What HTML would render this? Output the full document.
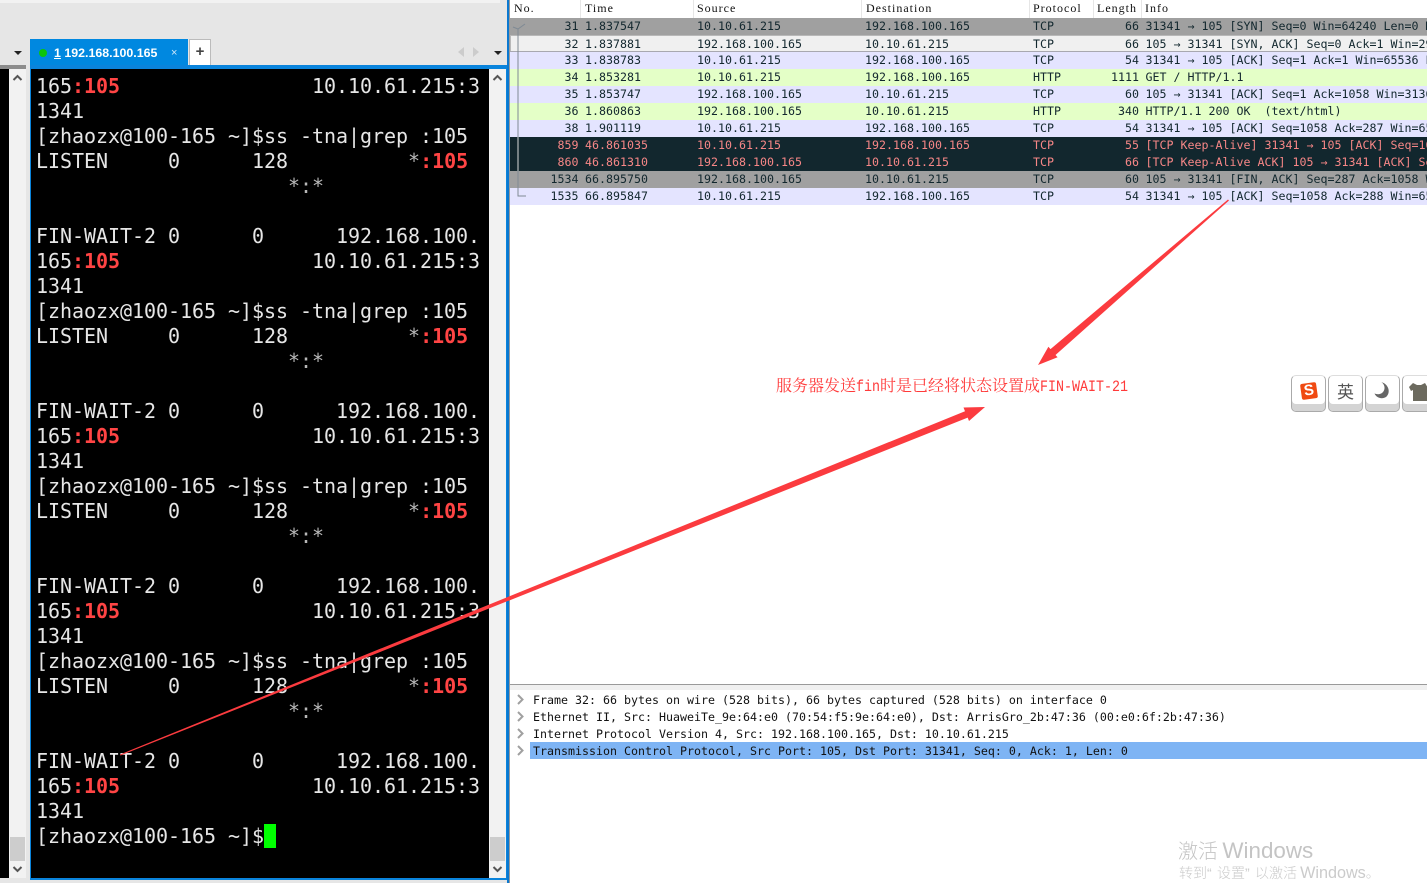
<!DOCTYPE html>
<html><head><meta charset="utf-8"><style>
html,body{margin:0;padding:0;background:#fff}
#p{position:relative;width:1427px;height:883px;overflow:hidden;background:#fff}
.a{position:absolute}
pre{margin:0}
#term{position:absolute;left:36px;top:74px;font:20px/25px "DejaVu Sans Mono",monospace;letter-spacing:-.04px;color:#e6e6e6;white-space:pre}
#term b{color:#ff4444;font-weight:700}
#term i{font-style:normal;color:#b8b8b8}
.r{position:absolute;left:510px;width:917px;height:17px;font:11.63px/17px "DejaVu Sans Mono",monospace;color:#12272e;white-space:pre;overflow:hidden}
.r span{position:absolute;top:0}
.n{left:0;width:68.5px;text-align:right}
.t{left:75px}.s{left:187px}.d{left:355px}.o{left:523px}
.l{left:569px;width:60px;text-align:right}
.i{left:635.5px}
.g{background:#a0a0a0}.u{background:#e4e4ff}.e{background:#e4ffc7}.k{background:#12272e;color:#f78787}
.h{position:absolute;top:1px;font:12px/14px "Liberation Serif",serif;color:#111;letter-spacing:1px}
.hs{position:absolute;top:0;width:1px;height:18px;background:#e6e6e6}
.f{position:absolute;left:533px;font:11.63px/17px "DejaVu Sans Mono",monospace;color:#111;white-space:pre}
.key{position:absolute;top:375px;width:35px;height:37px;box-sizing:border-box;background:#fff;border:1px solid #aaa;border-top-color:#ddd;border-radius:5px;box-shadow:inset 0 -7px 0 #d4d4d4}
.m{display:inline-block;font:16px/20px "Liberation Mono",monospace;transform:scaleX(.8333);transform-origin:0 50%}
.q{display:inline-block;font-family:"Liberation Sans",sans-serif}
</style></head><body><div id="p">

<!-- left window chrome -->
<div class="a" style="left:0;top:0;width:507px;height:883px;background:#e6e6e6"></div>
<div class="a" style="left:0;top:0;width:500px;height:3px;background:#f2f2f2"></div>
<div class="a" style="left:507px;top:0;width:2px;height:883px;background:#0a78d0"></div>
<div class="a" style="left:509px;top:0;width:1px;height:883px;background:#9a9a9a"></div>

<!-- tab bar -->
<div class="a" style="left:14px;top:51px;width:0;height:0;border:4px solid transparent;border-top:4px solid #222;border-bottom:0"></div>
<div class="a" style="left:30px;top:39px;width:158px;height:27px;background:#0088e0"></div>
<div class="a" style="left:39px;top:49px;width:8px;height:8px;border-radius:50%;background:#0cc40c"></div>
<div class="a" style="left:54px;top:45px;font:bold 12.4px/16px 'Liberation Sans',sans-serif;color:#fff;white-space:pre"><u>1</u> 192.168.100.165</div>
<div class="a" style="left:171px;top:46px;font:11px/14px 'Liberation Sans',sans-serif;color:#cfe8fa">×</div>
<div class="a" style="left:189px;top:39px;width:22px;height:26px;box-sizing:border-box;background:#fff;border:1px solid #bbb;border-bottom:0;text-align:center;font:bold 15px/24px 'Liberation Sans',sans-serif;color:#444">+</div>
<div class="a" style="left:458px;top:47px;width:0;height:0;border:5px solid transparent;border-right:6px solid #ccc;border-left:0"></div>
<div class="a" style="left:473px;top:47px;width:0;height:0;border:5px solid transparent;border-left:6px solid #ccc;border-right:0"></div>
<div class="a" style="left:494px;top:51px;width:0;height:0;border:4px solid transparent;border-top:4px solid #222;border-bottom:0"></div>

<!-- left sliver -->
<div class="a" style="left:0;top:65px;width:26px;height:4px;background:#8c8c8c"></div>
<div class="a" style="left:0;top:69px;width:9px;height:809px;background:#000"></div>
<div class="a" style="left:9px;top:69px;width:17px;height:809px;background:#f2f2f2"></div>
<div class="a" style="left:10px;top:837px;width:15px;height:24px;background:#cdcdcd"></div>
<svg class="a" style="left:9px;top:69px" width="17" height="18"><path d="M4.5 11 8.5 7 12.5 11" fill="none" stroke="#555" stroke-width="2"/></svg>
<svg class="a" style="left:9px;top:860px" width="17" height="18"><path d="M4.5 7 8.5 11 12.5 7" fill="none" stroke="#555" stroke-width="2"/></svg>

<!-- terminal -->
<div class="a" style="left:30px;top:65px;width:477px;height:815px;background:#0a84dc"></div>
<div class="a" style="left:31px;top:69px;width:458px;height:809px;background:#000"></div>
<div class="a" style="left:489px;top:69px;width:17px;height:809px;background:#f2f2f2"></div>
<div class="a" style="left:490px;top:837px;width:15px;height:24px;background:#cdcdcd"></div>
<svg class="a" style="left:489px;top:69px" width="17" height="18"><path d="M4.5 11 8.5 7 12.5 11" fill="none" stroke="#555" stroke-width="2"/></svg>
<svg class="a" style="left:489px;top:860px" width="17" height="18"><path d="M4.5 7 8.5 11 12.5 7" fill="none" stroke="#555" stroke-width="2"/></svg>
<pre id="term">165<b>:105</b>                10.10.61.215:3
1341
[zhaozx@100-165 ~]$ss -tna|grep :105
LISTEN     0      128          <i>*</i><b>:105</b>
                     <i>*:*</i>

FIN-WAIT-2 0      0      192.168.100.
165<b>:105</b>                10.10.61.215:3
1341
[zhaozx@100-165 ~]$ss -tna|grep :105
LISTEN     0      128          <i>*</i><b>:105</b>
                     <i>*:*</i>

FIN-WAIT-2 0      0      192.168.100.
165<b>:105</b>                10.10.61.215:3
1341
[zhaozx@100-165 ~]$ss -tna|grep :105
LISTEN     0      128          <i>*</i><b>:105</b>
                     <i>*:*</i>

FIN-WAIT-2 0      0      192.168.100.
165<b>:105</b>                10.10.61.215:3
1341
[zhaozx@100-165 ~]$ss -tna|grep :105
LISTEN     0      128          <i>*</i><b>:105</b>
                     <i>*:*</i>

FIN-WAIT-2 0      0      192.168.100.
165<b>:105</b>                10.10.61.215:3
1341
[zhaozx@100-165 ~]$</pre>
<div class="a" style="left:264px;top:824px;width:12px;height:24px;background:#00ff00"></div>

<!-- packet list header -->
<div class="h" style="left:514px">No.</div>
<div class="hs" style="left:580px"></div>
<div class="h" style="left:585px">Time</div>
<div class="hs" style="left:693px"></div>
<div class="h" style="left:697px">Source</div>
<div class="hs" style="left:861px"></div>
<div class="h" style="left:866px">Destination</div>
<div class="hs" style="left:1029px"></div>
<div class="h" style="left:1033px">Protocol</div>
<div class="hs" style="left:1093px"></div>
<div class="h" style="left:1097px">Length</div>
<div class="hs" style="left:1141px"></div>
<div class="h" style="left:1145px">Info</div>

<!-- packet rows -->
<div class="r g" style="top:18px"><span class="n">31</span><span class="t">1.837547</span><span class="s">10.10.61.215</span><span class="d">192.168.100.165</span><span class="o">TCP</span><span class="l">66</span><span class="i">31341 → 105 [SYN] Seq=0 Win=64240 Len=0 MSS=1460</span></div>
<div class="r" style="top:35px;height:17px;background:#f0f0f0;box-shadow:inset 0 -1px 0 #a8a8b0,inset 0 1px 0 #b8b8b8,inset 1px 0 0 #b8b8b8"><span class="n" style="top:1px">32</span><span class="t" style="top:1px">1.837881</span><span class="s" style="top:1px">192.168.100.165</span><span class="d" style="top:1px">10.10.61.215</span><span class="o" style="top:1px">TCP</span><span class="l" style="top:1px">66</span><span class="i" style="top:1px">105 → 31341 [SYN, ACK] Seq=0 Ack=1 Win=29200 Len=0</span></div>
<div class="r u" style="top:52px"><span class="n">33</span><span class="t">1.838783</span><span class="s">10.10.61.215</span><span class="d">192.168.100.165</span><span class="o">TCP</span><span class="l">54</span><span class="i">31341 → 105 [ACK] Seq=1 Ack=1 Win=65536 Len=0</span></div>
<div class="r e" style="top:69px"><span class="n">34</span><span class="t">1.853281</span><span class="s">10.10.61.215</span><span class="d">192.168.100.165</span><span class="o">HTTP</span><span class="l">1111</span><span class="i">GET / HTTP/1.1</span></div>
<div class="r u" style="top:86px"><span class="n">35</span><span class="t">1.853747</span><span class="s">192.168.100.165</span><span class="d">10.10.61.215</span><span class="o">TCP</span><span class="l">60</span><span class="i">105 → 31341 [ACK] Seq=1 Ack=1058 Win=31360 Len=0</span></div>
<div class="r e" style="top:103px"><span class="n">36</span><span class="t">1.860863</span><span class="s">192.168.100.165</span><span class="d">10.10.61.215</span><span class="o">HTTP</span><span class="l">340</span><span class="i">HTTP/1.1 200 OK  (text/html)</span></div>
<div class="r u" style="top:120px"><span class="n">38</span><span class="t">1.901119</span><span class="s">10.10.61.215</span><span class="d">192.168.100.165</span><span class="o">TCP</span><span class="l">54</span><span class="i">31341 → 105 [ACK] Seq=1058 Ack=287 Win=65280 Len=0</span></div>
<div class="r k" style="top:137px;color:#f78787"><span class="n">859</span><span class="t">46.861035</span><span class="s">10.10.61.215</span><span class="d">192.168.100.165</span><span class="o">TCP</span><span class="l">55</span><span class="i">[TCP Keep-Alive] 31341 → 105 [ACK] Seq=1057 Ack=287</span></div>
<div class="r k" style="top:154px;color:#f78787"><span class="n">860</span><span class="t">46.861310</span><span class="s">192.168.100.165</span><span class="d">10.10.61.215</span><span class="o">TCP</span><span class="l">66</span><span class="i">[TCP Keep-Alive ACK] 105 → 31341 [ACK] Seq=287 Ack=1058</span></div>
<div class="r g" style="top:171px"><span class="n">1534</span><span class="t">66.895750</span><span class="s">192.168.100.165</span><span class="d">10.10.61.215</span><span class="o">TCP</span><span class="l">60</span><span class="i">105 → 31341 [FIN, ACK] Seq=287 Ack=1058 Win=31360</span></div>
<div class="r u" style="top:188px"><span class="n">1535</span><span class="t">66.895847</span><span class="s">10.10.61.215</span><span class="d">192.168.100.165</span><span class="o">TCP</span><span class="l">54</span><span class="i">31341 → 105 [ACK] Seq=1058 Ack=288 Win=65280 Len=0</span></div>

<svg class="a" style="left:510px;top:18px" width="20" height="190"><path d="M3 9 8 11 15 6M8 11V178H16" fill="none" stroke="#7f8a94" stroke-width="1"/><path d="M8 119V153" stroke="#d8d8d8" stroke-width="1"/></svg>

<!-- detail pane -->
<div class="a" style="left:510px;top:684px;width:917px;height:1px;background:#9a9a9a"></div>
<div class="a" style="left:510px;top:685px;width:917px;height:5px;background:#f0f0f0"></div>
<div class="a" style="left:530px;top:742px;width:897px;height:17px;background:#7eb4f4"></div>
<svg class="a" style="left:515px;top:692px" width="12" height="68" fill="none" stroke="#a0a0a0" stroke-width="2"><path d="M3 3 7.500 7.500 3 12M3 20 7.500 24.500 3 29M3 37 7.500 41.500 3 46M3 54 7.500 58.500 3 63"/></svg>
<div class="f" style="top:692px">Frame 32: 66 bytes on wire (528 bits), 66 bytes captured (528 bits) on interface 0</div>
<div class="f" style="top:709px">Ethernet II, Src: HuaweiTe_9e:64:e0 (70:54:f5:9e:64:e0), Dst: ArrisGro_2b:47:36 (00:e0:6f:2b:47:36)</div>
<div class="f" style="top:726px">Internet Protocol Version 4, Src: 192.168.100.165, Dst: 10.10.61.215</div>
<div class="f" style="top:743px">Transmission Control Protocol, Src Port: 105, Dst Port: 31341, Seq: 0, Ack: 1, Len: 0</div>

<!-- annotation -->
<div class="a" style="left:776px;top:375px;height:20px;width:360px;color:#ff3a3a;font:16px/20px 'Noto Serif CJK SC',serif;white-space:pre">服务器发送<span class="m" style="margin-right:-4.800px">fin</span>时是已经将状态设置成<span class="m">FIN-WAIT-21</span></div>

<!-- IME toolbar -->
<div class="key" style="left:1291px"></div>
<div class="key" style="left:1328px"></div>
<div class="key" style="left:1365px"></div>
<div class="key" style="left:1402px"></div>
<div class="a" style="left:1301px;top:383px;width:16px;height:16px;background:#f04a12;border-radius:2px;transform:rotate(-8deg);color:#fff;text-align:center;font:bold 15px/16px 'Liberation Sans',sans-serif">S</div>
<div class="a" style="left:1337px;top:381px;font:17px/20px 'Noto Sans CJK SC',sans-serif;color:#555">英</div>
<svg class="a" style="left:1372px;top:381px" width="20" height="20"><path d="M9 1C13 3 14 9 10 12 8 13.500 5 13.500 2.500 12.500 4.500 17 10 18.500 14 16 19 12 17 3 9 1Z" fill="#666"/></svg>
<svg class="a" style="left:1408px;top:382px" width="19" height="19"><path d="M5 1 9 3H13L17 1 20 6V19H5V8L3 9 1 5Z" fill="#6c6a5e"/></svg>

<!-- watermark -->
<div class="a" style="left:1178px;top:836px;font:20px/28px 'Noto Sans CJK SC',sans-serif;color:#c4c4c4;white-space:pre;font-weight:300">激活 <span style="font-family:'Liberation Sans',sans-serif;font-size:22.400px">Windows</span></div>
<div class="a" style="left:1179px;top:863px;font:14px/20px 'Noto Sans CJK SC',sans-serif;color:#cbcbcb;white-space:pre;font-weight:300">转到<span class="q" style="width:10px">“</span>设置<span class="q" style="width:10px">”</span>以激活 <span style="font-family:'Liberation Sans',sans-serif;font-size:16.200px">Windows</span>。</div>

<!-- arrows -->
<svg class="a" style="left:0;top:0" width="1427" height="883">
<polygon points="120,754.500 120.500,755.500 967.700,417.600 969,421 985,407 963.500,407.500 965,411.200" fill="#fb3b3f"/>
<polygon points="1228,199.500 1229,200.500 1055.500,355 1057.600,357.300 1038,365 1048.400,346.700 1050.500,349.100" fill="#fb3b3f"/>
</svg>
</div></body></html>
